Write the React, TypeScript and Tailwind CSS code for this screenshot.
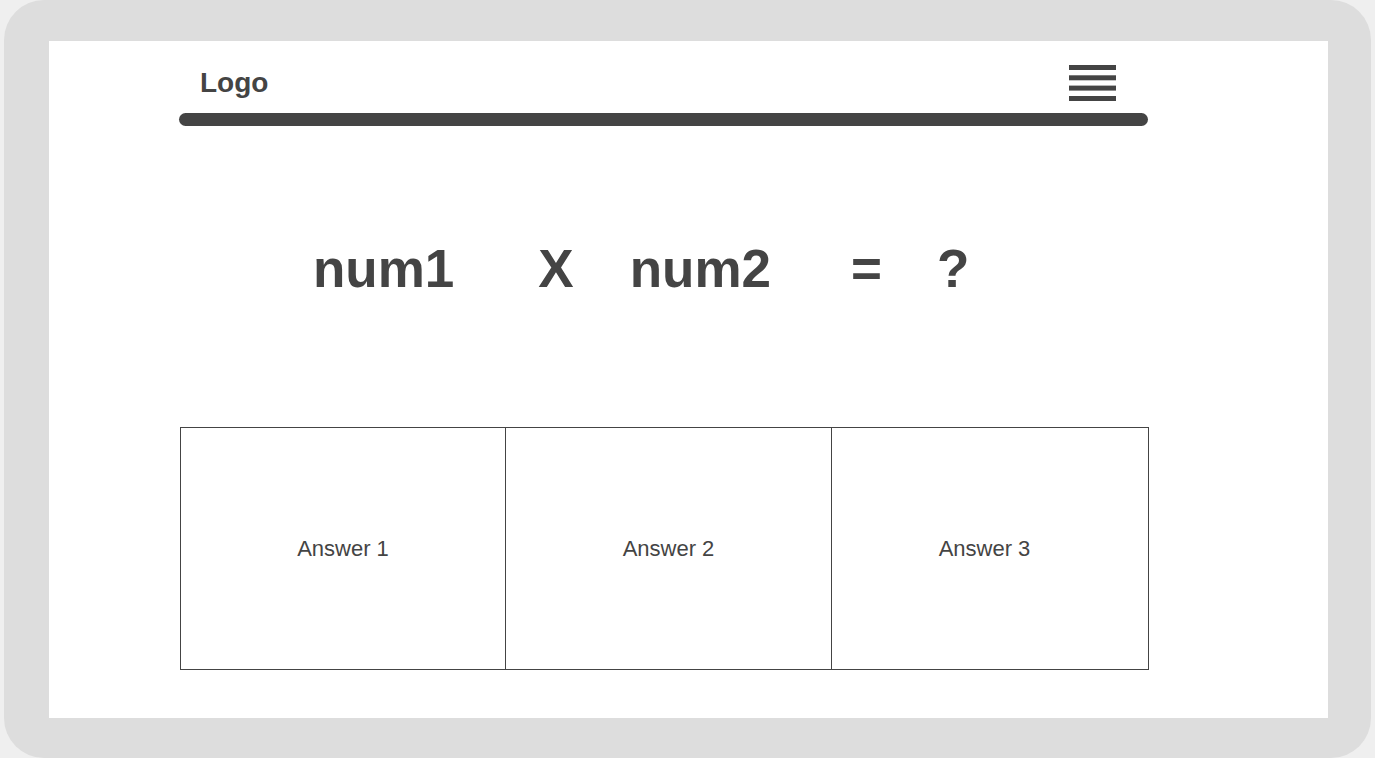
import React from "react";

export default function App() {
  const font = { fontFamily: '"Liberation Sans", Arial, Helvetica, sans-serif' };
  return (
    <div className="w-full h-[758px] bg-[#efefef] overflow-hidden" style={font}>
      <div className="mx-[4px] h-[758px] rounded-[40px] bg-[#dddddd] pt-[41px] pl-[45px] pr-[43px] pb-[40px]">
        <div className="h-full w-full bg-white">
          <div className="ml-[130px] w-[970px] flex flex-col">
            {/* header */}
            <div className="h-[72px] pt-[12px] flex items-center">
              <div className="ml-[21px] text-[28px] font-bold leading-none text-[#444444]">Logo</div>
              <svg className="ml-auto mr-[33px]" width="47" height="36" viewBox="0 0 47 36">
                <rect x="0" y="0" width="47" height="5" fill="#444444" />
                <rect x="0" y="10.3" width="47" height="5" fill="#444444" />
                <rect x="0" y="20.6" width="47" height="5" fill="#444444" />
                <rect x="0" y="31" width="47" height="5" fill="#444444" />
              </svg>
            </div>
            <div className="h-[13px] w-[969px] rounded-full bg-[#444444]" />

            {/* equation */}
            <div className="mt-[116px] h-[53px] flex items-start text-[53px] font-bold leading-none text-[#444444] whitespace-nowrap">
              <span className="ml-[134px]">num1</span>
              <span className="ml-[84px]">X</span>
              <span className="ml-[56px]">num2</span>
              <span className="ml-[80px]">=</span>
              <span className="ml-[55px]">?</span>
            </div>

            {/* answers */}
            <div className="mt-[132px] ml-[1px] h-[243px] w-[969px] border border-[#444444] flex text-[22px] text-[#444444]">
              <div className="w-[325px] flex items-center justify-center border-r border-[#444444]">Answer 1</div>
              <div className="w-[326px] flex items-center justify-center border-r border-[#444444]">Answer 2</div>
              <div className="flex-1 flex items-center justify-center pr-[11px]">Answer 3</div>
            </div>
          </div>
        </div>
      </div>
    </div>
  );
}
